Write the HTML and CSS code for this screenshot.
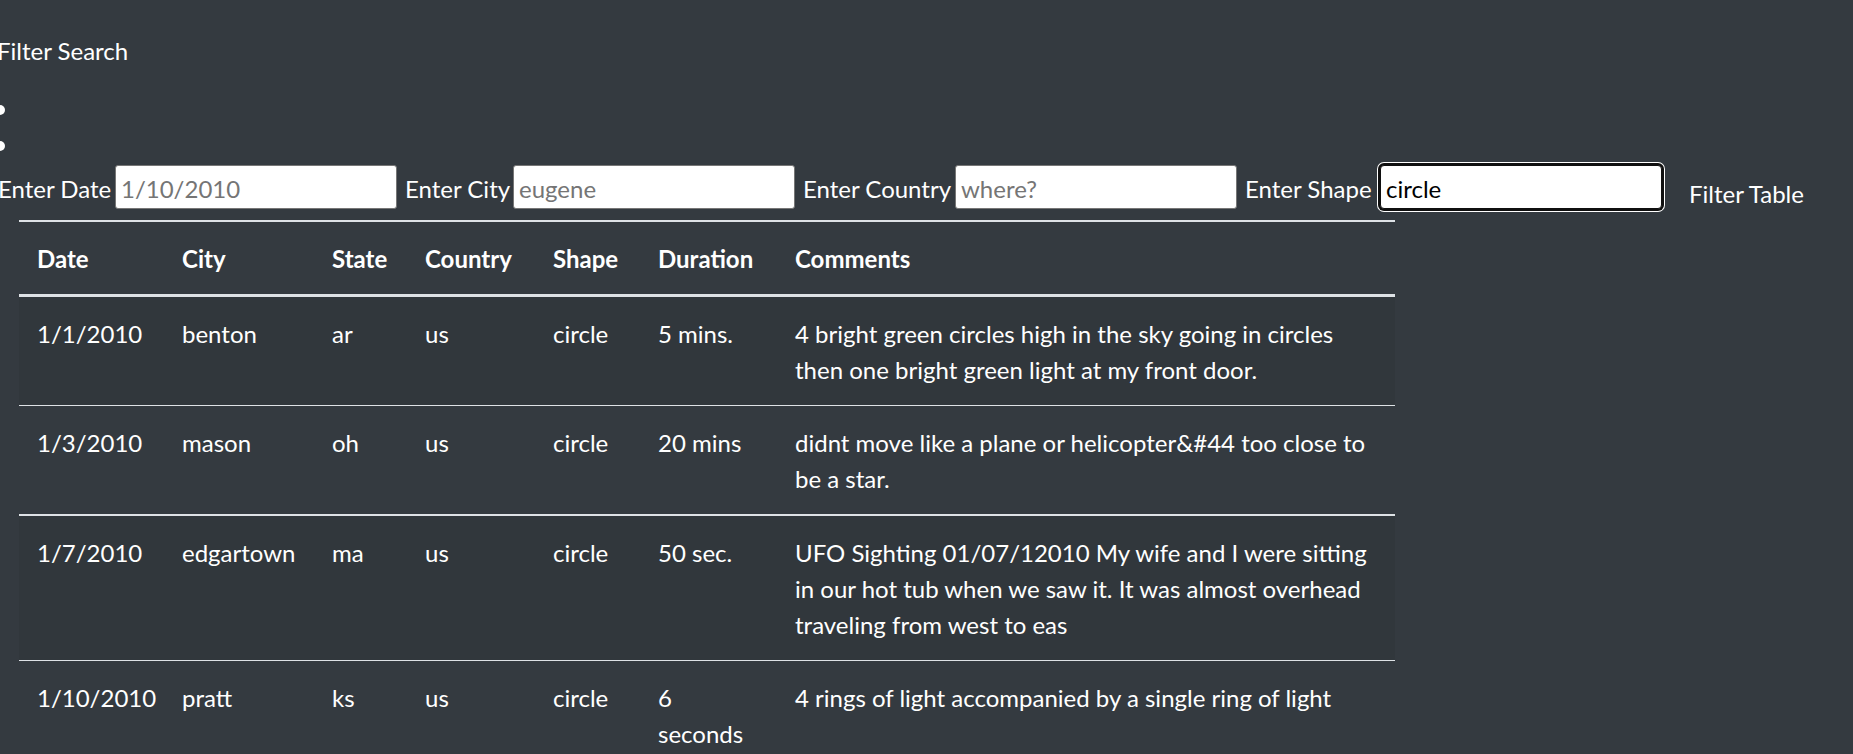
FILE: index.html
```html
<!DOCTYPE html>
<html lang="en">
<head>
<meta charset="utf-8">
<title>UFO Sightings</title>
<link rel="stylesheet" href="styles.css">
</head>
<body>
<main class="page">
  <p class="filter-title">Filter Search</p>
  <ul class="filter-list">
    <li></li>
    <li></li>
  </ul>
  <form class="filter-row">
    <label class="filter-label first" for="datetime">Enter Date</label>
    <input class="filter-input" id="datetime" type="text" placeholder="1/10/2010">
    <label class="filter-label" for="city">Enter City</label>
    <input class="filter-input" id="city" type="text" placeholder="eugene">
    <label class="filter-label" for="country">Enter Country</label>
    <input class="filter-input" id="country" type="text" placeholder="where?">
    <label class="filter-label" for="shape">Enter Shape</label>
    <input class="filter-input is-focused" id="shape" type="text" value="circle">
    <button class="filter-btn" type="button">Filter Table</button>
  </form>
  <table class="ufo-table">
    <colgroup>
      <col class="c-date"><col class="c-city"><col class="c-state"><col class="c-country"><col class="c-shape"><col class="c-duration"><col class="c-comments">
    </colgroup>
    <thead>
      <tr><th>Date</th><th>City</th><th>State</th><th>Country</th><th>Shape</th><th>Duration</th><th>Comments</th></tr>
    </thead>
    <tbody>
      <tr>
        <td>1/1/2010</td><td>benton</td><td>ar</td><td>us</td><td>circle</td><td>5 mins.</td>
        <td class="comment">4 bright green circles high in the sky going in circles<br>then one bright green light at my front door.</td>
      </tr>
      <tr>
        <td>1/3/2010</td><td>mason</td><td>oh</td><td>us</td><td>circle</td><td>20 mins</td>
        <td class="comment">didnt move like a plane or helicopter&amp;#44 too close to<br>be a star.</td>
      </tr>
      <tr class="thick-top">
        <td>1/7/2010</td><td>edgartown</td><td>ma</td><td>us</td><td>circle</td><td>50 sec.</td>
        <td class="comment">UFO Sighting 01/07/12010 My wife and I were sitting<br>in our hot tub when we saw it. It was almost overhead<br>traveling from west to eas</td>
      </tr>
      <tr>
        <td>1/10/2010</td><td>pratt</td><td>ks</td><td>us</td><td>circle</td><td>6<br>seconds</td>
        <td class="comment">4 rings of light accompanied by a single ring of light</td>
      </tr>
    </tbody>
  </table>
</main>
</body>
</html>
```
FILE: styles.css
```css
html {
  background: #343a40;
  overflow: hidden;
}
body {
  margin: 0;
  background: #343a40;
  color: #fff;
  font-family: "Lato", "Noto Sans", sans-serif;
  font-size: 24px;
  line-height: 36px;
}
.page {
  padding-top: 33px;
}
.filter-title {
  margin: 0 0 0 -3px;
}
.filter-list {
  list-style: none;
  margin: 23px 0 1px 0;
  padding: 0;
}
.filter-list li {
  height: 36px;
  display: flex;
  align-items: center;
}
.filter-list li::before {
  content: "";
  width: 10px;
  height: 10px;
  border-radius: 50%;
  background: #fff;
  margin-left: -5px;
}
.filter-row {
  display: grid;
  grid-template-columns: 117px 282px 116px 282px 160px 282px 143px 282px auto;
  align-items: baseline;
  margin: 0 0 -1px -2px;
}
.filter-label {
  padding-left: 8px;
  white-space: nowrap;
}
.filter-label.first {
  padding-left: 0;
}
.filter-input {
  box-sizing: border-box;
  width: 282px;
  height: 44px;
  margin: 0;
  padding: 2px 5px 0 5px;
  border: 1px solid #767676;
  border-radius: 3px;
  background: #fff;
  color: #000;
  font-family: "Lato", "Noto Sans", sans-serif;
  font-size: 24px;
  outline: none;
}
.filter-input::placeholder {
  color: #757575;
}
.filter-input.is-focused {
  border-color: #101010;
  border-radius: 4px;
  box-shadow: 0 0 0 2px #101010, 0 0 0 3px #fff;
}
.filter-btn {
  align-self: start;
  justify-self: start;
  margin-left: 8px;
  padding: 10px 18px 8px 18px;
  border: 1px solid transparent;
  background: transparent;
  color: #fff;
  font-family: "Lato", "Noto Sans", sans-serif;
  font-size: 24px;
  line-height: 36px;
}
.ufo-table {
  margin-left: 19px;
  width: 1376px;
  table-layout: fixed;
  border-collapse: separate;
  border-spacing: 0;
  border-top: 2px solid #dee2e6;
}
.c-date { width: 145px; }
.c-city { width: 150px; }
.c-state { width: 93px; }
.c-country { width: 128px; }
.c-shape { width: 105px; }
.c-duration { width: 137px; }
.c-comments { width: 618px; }
.ufo-table th {
  padding: 19px 18px 17px 18px;
  text-align: left;
  font-weight: 700;
  vertical-align: bottom;
  border-bottom: 3px solid #dee2e6;
}
.ufo-table td {
  padding: 19px 18px 17px 18px;
  vertical-align: top;
  border-top: 1px solid #dee2e6;
  white-space: nowrap;
}
.ufo-table tbody tr:first-child td {
  border-top: none;
}
.ufo-table tbody tr.thick-top td {
  border-top-width: 2px;
}
.ufo-table tbody tr:nth-child(odd) {
  background: rgba(0, 0, 0, 0.05);
}
```
